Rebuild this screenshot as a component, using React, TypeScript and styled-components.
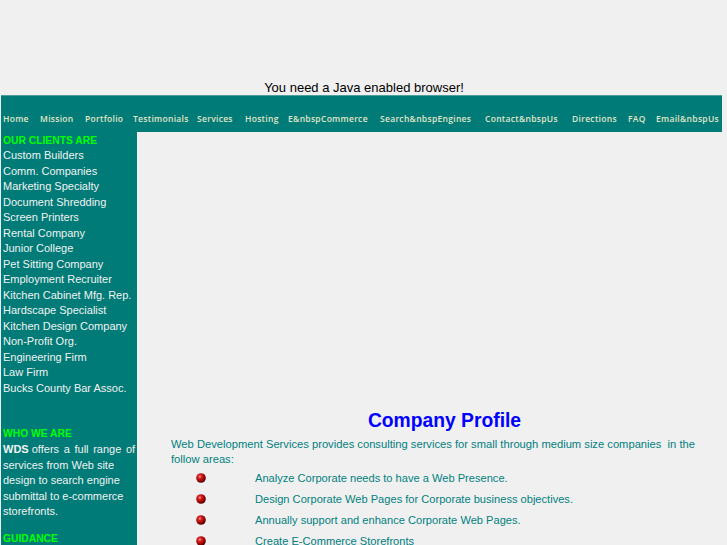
import React from "react";
import styled, { createGlobalStyle } from "styled-components";

const Global = createGlobalStyle`
  html, body { margin: 0; padding: 0; background: #f0f0f0; }
  body { font-family: "Liberation Sans", Arial, sans-serif; }
`;

const Page = styled.div`
  width: 722px;
  min-height: 545px;
  overflow: hidden;
  box-sizing: border-box;
  padding-left: 1px;
`;

const AppletArea = styled.div`
  height: 95px;
  display: flex;
  align-items: flex-end;
  justify-content: center;
  font-size: 13px;
  line-height: 15px;
  color: #000;
  padding-left: 5px;
  box-sizing: border-box;
`;

const NavBar = styled.nav`
  height: 37px;
  background: #007b77;
  border-top: 1px solid #4c9e9a;
  box-sizing: border-box;
  display: flex;
  align-items: center;
  padding: 8px 0 0 2px;
`;

const NavItem = styled.a<{ $w: number }>`
  font-family: "Open Sans", "DejaVu Sans", sans-serif;
  font-weight: 600;
  font-size: 8.5px;
  letter-spacing: 0.3px;
  color: #e2e6c8;
  text-decoration: none;
  white-space: nowrap;
  width: ${(p) => p.$w}px;
  flex: none;
`;

const Body = styled.div`
  display: grid;
  grid-template-columns: 136px 1fr;
  min-height: 413px;
`;

const Sidebar = styled.aside`
  background: #007b77;
  padding: 1px 0 0 2px;
  color: #f2f2f2;
  font-size: 11px;
  line-height: 15.47px;
`;

const SideHead = styled.div<{ $gap?: number }>`
  color: #00ff00;
  font-weight: bold;
  font-size: 10.3px;
  margin-top: ${(p) => p.$gap ?? 0}px;
`;

const SideItem = styled.div`
  white-space: nowrap;
`;

const SideText = styled.p`
  margin: 1px 0 0;
  line-height: 15.5px;
  b { font-weight: bold; }
`;

const Lead = styled.span`
  word-spacing: 1.6px;
`;

const Main = styled.main`
  padding: 278px 4px 0 34px;
  color: #008080;
  font-size: 11.1px;
`;

const Title = styled.h2`
  margin: 0;
  text-align: center;
  color: #0000ff;
  font-size: 19.3px;
  line-height: 22px;
  font-weight: bold;
`;

const Intro = styled.p`
  margin: 4.5px 0 0;
  padding-right: 8px;
  font-size: 11.2px;
  line-height: 15px;
`;

const List = styled.div`
  display: grid;
  grid-template-columns: 84px 1fr;
  grid-auto-rows: 21px;
  align-items: center;
  margin-top: 1px;
`;

const BulletCell = styled.div`
  padding-left: 25px;
  display: flex;
  align-items: center;
`;

const Bullet = () => (
  <svg width="10" height="10" viewBox="0 0 10 10">
    <defs>
      <radialGradient id="rb" cx="0.38" cy="0.35" r="0.7">
        <stop offset="0" stopColor="#ffb0b0" />
        <stop offset="0.25" stopColor="#e02020" />
        <stop offset="0.75" stopColor="#8a0000" />
        <stop offset="1" stopColor="#300000" />
      </radialGradient>
    </defs>
    <circle cx="5" cy="5" r="4.8" fill="url(#rb)" />
  </svg>
);

const navItems: [string, number][] = [
  ["Home", 37],
  ["Mission", 45],
  ["Portfolio", 48],
  ["Testimonials", 64],
  ["Services", 48],
  ["Hosting", 43],
  ["E&nbspCommerce", 92],
  ["Search&nbspEngines", 105],
  ["Contact&nbspUs", 87],
  ["Directions", 56],
  ["FAQ", 28],
  ["Email&nbspUs", 70],
];

const clients = [
  "Custom Builders",
  "Comm. Companies",
  "Marketing Specialty",
  "Document Shredding",
  "Screen Printers",
  "Rental Company",
  "Junior College",
  "Pet Sitting Company",
  "Employment Recruiter",
  "Kitchen Cabinet Mfg. Rep.",
  "Hardscape Specialist",
  "Kitchen Design Company",
  "Non-Profit Org.",
  "Engineering Firm",
  "Law Firm",
  "Bucks County Bar Assoc.",
];

const services = [
  "Analyze Corporate needs to have a Web Presence.",
  "Design Corporate Web Pages for Corporate business objectives.",
  "Annually support and enhance Corporate Web Pages.",
  "Create E-Commerce Storefronts",
];

export default function App() {
  return (
    <Page>
      <Global />
      <AppletArea>You need a Java enabled browser!</AppletArea>
      <NavBar>
        {navItems.map(([t, w]) => (
          <NavItem key={t} href="#" $w={w}>
            {t}
          </NavItem>
        ))}
      </NavBar>
      <Body>
        <Sidebar>
          <SideHead>OUR CLIENTS ARE</SideHead>
          {clients.map((c) => (
            <SideItem key={c}>{c}</SideItem>
          ))}
          <SideHead $gap={30}>WHO WE ARE</SideHead>
          <SideText>
            <b>WDS</b> <Lead>offers a full range of</Lead> services from Web site design to
            search engine submittal to e-commerce storefronts.
          </SideText>
          <SideHead $gap={11}>GUIDANCE</SideHead>
        </Sidebar>
        <Main>
          <Title>Company Profile</Title>
          <Intro>
            Web Development Services provides consulting services for small through medium size
            companies&nbsp; in the follow areas:
          </Intro>
          <List>
            {services.map((s) => (
              <React.Fragment key={s}>
                <BulletCell>
                  <Bullet />
                </BulletCell>
                <div>{s}</div>
              </React.Fragment>
            ))}
          </List>
        </Main>
      </Body>
    </Page>
  );
}
